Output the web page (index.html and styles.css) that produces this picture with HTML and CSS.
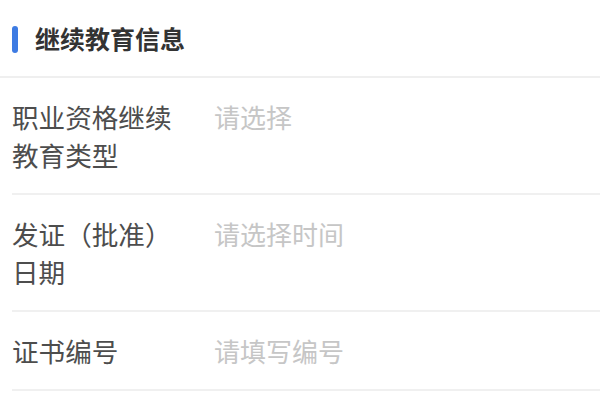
FILE: index.html
```html
<!DOCTYPE html>
<html lang="zh-CN">
<head>
<meta charset="utf-8">
<link rel="stylesheet" href="styles.css">
</head>
<body>
<div class="section">
  <div class="section-head">
    <span class="mark"></span>
    <span class="title">继续教育信息</span>
  </div>
  <div class="rows">
    <div class="row">
      <div class="label">职业资格继续<br>教育类型</div>
      <div class="value">请选择</div>
    </div>
    <div class="row">
      <div class="label">发证（批准）<br>日期</div>
      <div class="value">请选择时间</div>
    </div>
    <div class="row">
      <div class="label">证书编号</div>
      <div class="value">请填写编号</div>
    </div>
  </div>
</div>
</body>
</html>
```

FILE: styles.css
```css
html, body {
  margin: 0;
  padding: 0;
  background: #ffffff;
}
body {
  font-family: "Noto Sans CJK SC", "Noto Sans", sans-serif;
  width: 600px;
  height: 400px;
  overflow: hidden;
}
.section-head {
  display: flex;
  align-items: center;
  gap: 17px;
  padding-left: 12px;
  border-bottom: 2px solid #efefef;
  box-sizing: border-box;
  height: 78px;
}
.mark {
  width: 6px;
  height: 27px;
  border-radius: 3px;
  background: #3d7be3;
  margin-top: 2px;
}
.title {
  font-size: 25px;
  font-weight: 700;
  color: #333333;
  line-height: 1;
}
.rows {
  padding-left: 12px;
}
.row {
  display: flex;
  align-items: flex-start;
  padding: 20px 0 19px;
  border-bottom: 2px solid #f0f0f0;
}
.label {
  width: 202px;
  flex: none;
  font-size: 26.6px;
  line-height: 38px;
  color: #4d4d4d;
}
.value {
  font-size: 26px;
  line-height: 38px;
  color: #c6c6c6;
}
```
